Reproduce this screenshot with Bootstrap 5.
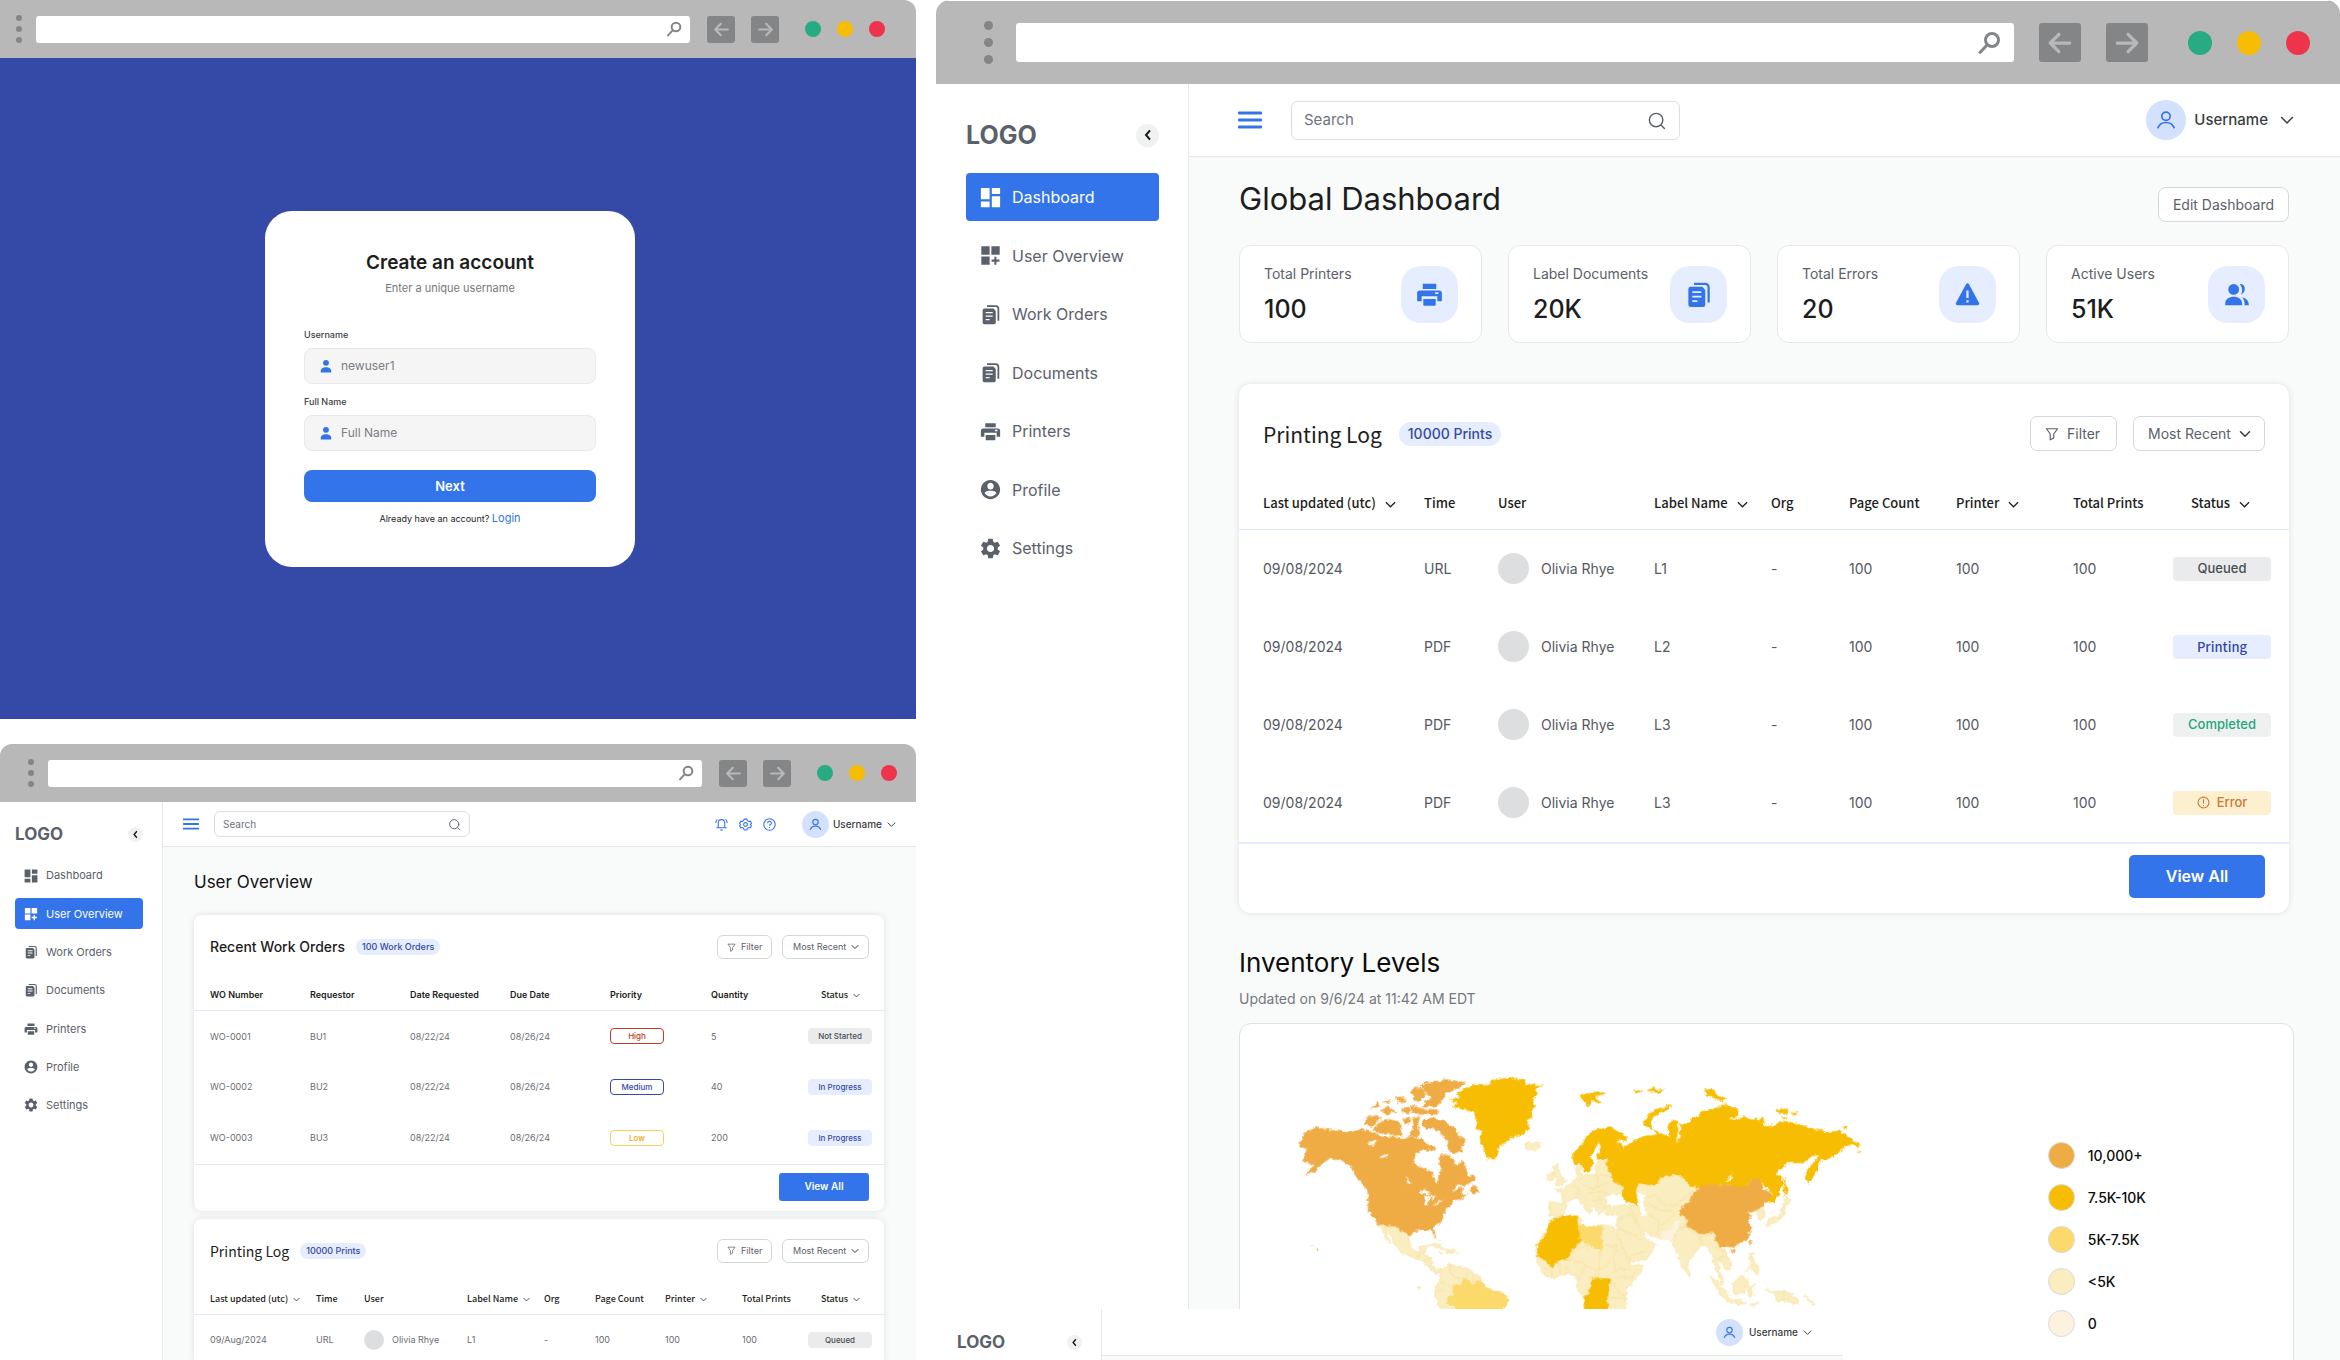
<!DOCTYPE html>
<html lang="en">
<head>
<meta charset="utf-8">
<meta name="viewport" content="width=device-width, initial-scale=1">
<title>Print management dashboards</title>
<link href="https://cdn.jsdelivr.net/npm/bootstrap@5.3.0/dist/css/bootstrap.min.css" rel="stylesheet">
<style>
:root{--blue:#3374ea;--navy:#3549a6;--ink:#1c1d20;--slate:#5b616b;--line:#e6e8e8;--canvas:#f9fbfa;--tint:#e5edfe}
body{font-family:Inter,"Open Sans",sans-serif;background:#fff;color:var(--ink);height:100vh;overflow:hidden}
svg{display:block;flex:none}
button,input,select{font-family:inherit}
.stage{display:grid;grid-template-columns:916fr 1404fr;column-gap:20px;height:100vh}
.stage-left{display:grid;grid-template-rows:719fr 616fr;row-gap:25px;min-width:0;min-height:0}
.stage-right{position:relative;display:flex;flex-direction:column;min-width:0;min-height:0}
.stage-right>.win-lg{flex:1}
.win{display:flex;flex-direction:column;min-width:0;min-height:0;overflow:hidden;position:relative;background:#fff}
.src{font-family:"Noto Sans CJK SC","Noto Sans",sans-serif}

/* browser chrome */
.chrome{background:#b8b8b8;flex:none;display:flex;align-items:center}
.chrome .kebab{display:flex;flex-direction:column;justify-content:space-between}
.chrome .kebab i{border-radius:50%;background:#838587;display:block}
.chrome .addr{flex:1;min-width:0;background:#fff;border-radius:3px;display:flex;align-items:center;justify-content:flex-end}
.chrome .addr input{flex:1;min-width:0;border:0;background:none;outline:0;height:100%}
.chrome .step{background:#838587;border:0;padding:0;border-radius:3px;display:flex;align-items:center;justify-content:center;color:#b8b8b8}
.chrome .lamps{display:flex}
.lamps i{border-radius:50%;display:block}
.lamps i:nth-child(1){background:#28ab82}.lamps i:nth-child(2){background:#f6bd02}.lamps i:nth-child(3){background:#ed344b}
.win-sm .chrome{height:58px;padding:0 19px 0 28px}
.win-sm .kebab{height:28px;width:6px;margin-right:14px}
.win-sm .kebab i{width:6px;height:6px}
.win-sm .addr{height:27px;padding-right:8px;margin-right:17px}
.win-sm .addr svg{width:16px;height:16px}
.win-sm .step{width:28px;height:27px;margin-right:16px}
.win-sm .step svg{width:17px;height:17px}
.win-sm .lamps{gap:16px;margin-left:10px}
.win-sm .lamps i{width:16px;height:16px}
.win-sm.win-cut .chrome{padding:0 31px 0 16px}
.win-lg .chrome{height:84px;padding:0 30px 0 48px;border-top:1px solid #fff}
.win-lg .kebab{height:43px;width:9px;margin-right:23px}
.win-lg .kebab i{width:9px;height:9px}
.win-lg .addr{height:39px;padding-right:13px;margin-right:25px}
.win-lg .addr svg{width:24px;height:24px}
.win-lg .step{width:42px;height:39px;margin-right:25px}
.win-lg .step svg{width:26px;height:26px}
.win-lg .lamps{gap:25px;margin-left:15px}
.win-lg .lamps i{width:24px;height:24px}
.win-cut{border-radius:0 12px 0 0}
.win-full{border-radius:12px 12px 0 0}
.win-lg{border-radius:14px 14px 0 0}

/* sign-up */
.signup-bg{background:var(--navy);padding-right:16px}
.signup{width:370px;background:#fff;border-radius:27px;padding:38px 39px 40px}
.signup h1{font-size:19px;line-height:28px;font-weight:600;margin:0 0 3px;text-align:center}
.signup .hint{font-size:11px;line-height:16px;color:#75777b;text-align:center;margin:0 0 33px}
.signup label{font-size:9px;line-height:12px;font-weight:500;color:#3c3e44;display:block;margin-bottom:7px}
.signup .field{height:36px;background:#f5f5f6;border:1px solid #e8e9ea;border-radius:8px;display:flex;align-items:center;padding-left:14px;gap:8px;margin-bottom:12px}
.signup .field svg{width:14px;height:14px;color:var(--blue)}
.signup .field input{border:0;background:none;outline:0;flex:1;min-width:0;font-size:12px;padding:0;color:#7b7e84}
.signup .field input::placeholder{color:#7b7e84;opacity:1}
.signup .btn{width:100%;height:32px;background:var(--blue);color:#fff;border-radius:8px;font-size:13px;line-height:16px;font-weight:600;margin-top:7px;padding:0}
.signup .foot{font-size:9px;line-height:16px;text-align:center;margin:8px 0 0}
.signup .foot a{font-size:11px;color:var(--blue);text-decoration:none}

/* application shell */
.shell{flex:1;min-height:0;display:flex}
.side{flex:none;background:#fff;border-right:1px solid var(--line)}
.side .top{display:flex;align-items:center;justify-content:space-between}
.brand{font-weight:700;color:var(--slate);line-height:1}
.fold{border:0;border-radius:50%;background:#f0f1f1;padding:0;display:flex;align-items:center;justify-content:center;color:#16171a}
.menu{display:flex;flex-direction:column;justify-content:space-between;flex-wrap:nowrap}
.menu .nav-link{display:flex;align-items:center;color:var(--slate);padding-top:0;padding-bottom:0;border-radius:4px}
.menu .nav-link.active{background:var(--blue);color:#fff}
.pane{flex:1;min-width:0;background:var(--canvas)}
.bar{background:#fff;border-bottom:1px solid var(--line);display:flex;align-items:center}
.burger{border:0;background:none;padding:0;color:var(--blue)}
.find{border:1px solid #dcdee0;border-radius:6px;display:flex;align-items:center;background:#fff;color:var(--slate)}
.find input{border:0;outline:0;background:none;flex:1;min-width:0;padding:0}
.find input::placeholder{color:#6f737a;opacity:1}
.tool{border:0;background:none;padding:0;color:var(--blue)}
.who{border:0;background:none;padding:0;display:flex;align-items:center;font-weight:500;color:#3a3d44}
.who .face{border-radius:50%;background:#d4e1fd;color:var(--blue);display:flex;align-items:center;justify-content:center}
.panel{background:#fff;box-shadow:0 0 6px rgba(40,50,60,.13)}
.panel-top{display:flex;align-items:center}
.panel h2,.panel-top .pill{margin:0}
.pill{background:var(--tint);color:var(--navy);font-weight:500;border-radius:20px}
.ctl{background-color:#fff;border:1px solid #d5d8db;color:var(--slate);display:flex;align-items:center;font-weight:400}
.go{background:var(--blue);color:#fff;font-weight:600;border:0}
.go:hover{background:#2563d8;color:#fff}
.grid-t{width:100%;table-layout:fixed;border-collapse:collapse}
.grid-t th,.grid-t td{padding:0;white-space:nowrap;text-align:left;vertical-align:middle}
.grid-t th svg{display:inline-block;vertical-align:middle}
.grid-t thead{border-bottom:1px solid #dfe8fb}
.user{display:flex;align-items:center}
.user i{background:#dddee0;border-radius:50%;flex:none}
.tag{display:flex;align-items:center;justify-content:center;border-radius:4px;font-weight:500}
.t-grey{background:#e9ebec;color:#4a4d54}.t-blue{background:var(--tint);color:var(--navy)}
.t-green{background:#eff1f1;color:#1fa67c}.t-amber{background:#fdf0d0;color:#d0782e}
.ring{background:#fff;border:1px solid}
.r-high{color:#c23b22}.r-mid{color:var(--navy)}.r-low{color:#f2a414;border-color:#f9d058}

.win-sm .side{width:163px;padding:22px 19px 0 15px}
.win-sm .side .top{height:20px;margin-bottom:16px}
.win-sm .brand{font-size:17px}
.win-sm .fold{width:15px;height:15px}.win-sm .fold svg{width:11px;height:11px}
.win-sm .menu{height:261px}
.win-sm .menu .nav-link{height:31px;padding-left:9px;padding-right:0;gap:8px;font-size:11px}
.win-sm .menu svg{width:14px;height:14px}
.win-sm .bar{height:45px;padding:0 20px 0 20px}
.win-sm .burger svg{width:16px;height:12px}
.win-sm .find{width:256px;height:26px;margin-left:15px;padding:0 8px;font-size:10px}
.win-sm .find svg{width:13px;height:13px}
.win-sm .tools{display:flex;gap:11px;margin-right:26px}
.win-sm .tool svg{width:13px;height:13px}
.win-sm .who{font-size:10px}
.win-sm .face{width:27px;height:27px;margin-right:4px}.win-sm .face svg{width:13px;height:13px}
.win-sm .who>svg{width:9px;height:9px;margin-left:5px}
.win-sm .body{padding:23px 32px 0 31px}
.win-sm h1.ttl{font-size:17px;line-height:24px;font-weight:400;margin:0 0 21px;color:#111}
.win-sm .panel{border-radius:8px;margin-bottom:8px}
.win-sm .panel-top{padding:20px 15px 0 16px}
.win-sm .panel h2{font-size:14px;line-height:24px;font-weight:500}
.win-sm .panel h2.src{font-weight:400}
.win-sm .panel-top .pill{font-size:9px;line-height:16px;padding:0 6px;margin-left:11px}
.win-sm .ctl{height:24px;font-size:9px;border-radius:6px}
.win-sm .ctl.filter{width:55px;gap:5px;padding:0 9px;margin:0 10px 0 auto}
.win-sm .ctl.filter svg{width:9px;height:9px}
.win-sm .ctl.form-select{width:87px;padding:0 18px 0 10px;background-position:right 9px center;background-size:8px 8px}
.win-sm .grid-t th{font-size:9px;line-height:14px;padding:29px 0 8px;font-weight:600}
.win-sm .grid-t .src th,.win-sm .grid-t th.src{font-size:9px;font-weight:500}
.win-sm .grid-t th svg{width:7px;height:7px;margin-left:5px}
.win-sm .grid-t td{font-size:9px;height:51px;color:#6a6e75}
.win-sm .grid-t tr>*:first-child{padding-left:16px}
.win-sm .grid-t th:last-child{padding-left:13px}
.win-sm .tag{width:64px;height:16px;font-size:8px}
.win-sm .ring{width:54px}
.win-sm .user{gap:8px}.win-sm .user i{width:20px;height:20px}
.win-sm .panel-end{border-top:1px solid var(--line);padding:8px 15px 10px;display:flex;justify-content:flex-end}
.win-sm .go{width:90px;height:28px;font-size:10px;padding:0;border-radius:3px}

.win-lg .side{width:253px;padding:39px 29px 0 30px}
.win-lg .side .top{height:24px;margin-bottom:26px}
.win-lg .brand{font-size:25px}
.win-lg .fold{width:23px;height:23px}.win-lg .fold svg{width:16px;height:16px}
.win-lg .menu{height:399px}
.win-lg .menu .nav-link{height:48px;padding-left:14px;gap:11px;font-size:16px}
.win-lg .menu svg{width:21px;height:21px}
.win-lg .bar{height:73px;padding:0 46px 0 49px}
.win-lg .burger svg{width:24px;height:18px}
.win-lg .find{width:389px;height:39px;margin-left:29px;padding:0 13px 0 12px;font-size:15px}
.win-lg .find svg{width:19px;height:19px}
.win-lg .who{font-size:15px}
.win-lg .face{width:40px;height:40px;margin-right:8px}.win-lg .face svg{width:20px;height:20px}
.win-lg .who>svg{width:14px;height:14px;margin-left:12px}
.win-lg .body{padding:30px 51px 0 50px}
.win-lg .ttl{font-size:31px;line-height:24px;font-weight:400;margin:0}
.edit{width:131px;height:35px;font-size:14px;border-radius:8px;padding:0;justify-content:center}
.stats{display:grid;grid-template-columns:repeat(4,1fr);gap:26px;margin:23px 0 41px}
.stat{background:#fff;border:1px solid var(--line);border-radius:12px;height:98px;display:flex;align-items:center;justify-content:space-between;padding:0 23px 0 24px}
.stat small{display:block;font-size:14px;line-height:18px;color:var(--slate);margin-bottom:12px}
.stat strong{display:block;font-size:25px;line-height:28px;font-weight:500}
.stat .chip{width:57px;height:57px;border-radius:20px;background:var(--tint);color:var(--blue);display:flex;align-items:center;justify-content:center}
.stat .chip svg{width:27px;height:27px}
.win-lg .panel{border-radius:12px}
.win-lg .panel-top{padding:32px 24px 0}
.win-lg .panel h2{font-size:21px;line-height:32px;font-weight:400}
.win-lg .panel-top .pill{font-size:14px;line-height:24px;padding:0 9px;margin-left:17px}
.win-lg .ctl.filter{width:87px;height:35px;font-size:14px;gap:8px;padding:0 14px;border-radius:7px;margin:0 16px 0 auto}
.win-lg .ctl.filter svg{width:14px;height:14px}
.win-lg .ctl.form-select{width:132px;height:35px;font-size:14px;border-radius:7px;padding:0 28px 0 14px;background-position:right 13px center;background-size:12px 12px}
.win-lg .grid-t th{font-size:13px;line-height:20px;padding:42px 0 16px;font-weight:500}
.win-lg .grid-t th svg{width:11px;height:11px;margin-left:9px}
.win-lg .grid-t td{font-size:14px;height:78px;color:#54585f}
.win-lg .grid-t tr>*:first-child{padding-left:24px}
.win-lg .grid-t th:last-child{padding-left:18px}
.win-lg .tag{width:98px;height:24px;font-size:13px;gap:7px}
.win-lg .tag svg{width:13px;height:13px}
.win-lg .user{gap:12px}.win-lg .user i{width:31px;height:31px}
.win-lg .panel-end{border-top:2px solid #e4ecfd;padding:11px 24px 15px;display:flex;justify-content:flex-end}
.win-lg .go{width:136px;height:43px;font-size:16px;padding:0;border-radius:5px}
.inv{font-size:26px;line-height:36px;font-weight:400;margin:32px 0 8px;color:#0c0c0d}
.inv-sub{font-size:14px;line-height:20px;color:#75787d;margin:0 0 14px}
.atlas{background:#fff;border:1px solid #dfe2e2;border-radius:12px;height:420px;display:flex;padding:45px 0 0 50px;margin-right:-5px}
.atlas svg{width:60%;height:251px}
.legend{list-style:none;margin:0;padding:73px 0 0 156px;font-size:14px;font-weight:500;color:#0c0c0d;display:flex;flex-direction:column;gap:14px}
.legend li{display:flex;align-items:center;gap:13px;height:28px}
.legend i{width:27px;height:27px;border-radius:50%;border:1px solid #d9dadd}
.q4 i{background:#efab44}.q3 i{background:#f6bd02}.q2 i{background:#fbd96a}.q1 i{background:#faedc0}.q0 i{background:#fdf2de}

/* window that overlaps the large one at the bottom */
.peek{position:absolute;left:0;bottom:0;width:907px;height:51px;background:#fff;display:flex;overflow:hidden}
.peek .side{width:166px;padding:23px 19px 0 21px}
.peek .bar{height:47px;padding:0 31px 0 0;justify-content:flex-end}
.peek .face{margin-right:6px}
</style>
<script src="https://cdn.jsdelivr.net/npm/bootstrap@5.3.0/dist/js/bootstrap.bundle.min.js"></script>
</head>
<body>
<svg width="0" height="0" class="position-absolute" aria-hidden="true">
  <symbol id="loupe" viewBox="0 0 24 24"><g fill="none" stroke="#838587" stroke-width="3" stroke-linecap="round"><circle cx="15" cy="9" r="6.5"/><path d="M10 14l-7 7.500"/></g></symbol>
  <symbol id="left" viewBox="0 0 24 24"><path d="M21 12H4M11 4l-8 8 8 8" fill="none" stroke="currentColor" stroke-width="3" stroke-linecap="round" stroke-linejoin="round"/></symbol>
  <symbol id="right" viewBox="0 0 24 24"><path d="M3 12h17M13 4l8 8-8 8" fill="none" stroke="currentColor" stroke-width="3" stroke-linecap="round" stroke-linejoin="round"/></symbol>
  <symbol id="person" viewBox="0 0 24 24"><circle cx="12" cy="6.500" r="5" fill="currentColor"/><path d="M3 23v-2c0-5 4-7 9-7s9 2 9 7v2z" fill="currentColor"/></symbol>
  <symbol id="back" viewBox="0 0 12 12"><path d="M7.500 2.500L4.500 6l3 3.500" fill="none" stroke="currentColor" stroke-width="1.500"/></symbol>
  <symbol id="down" viewBox="0 0 12 12"><path d="M1 3.500l5 5 5-5" fill="none" stroke="currentColor" stroke-width="1.300"/></symbol>
  <symbol id="bars" viewBox="0 0 24 18"><path d="M1 2h22M1 9h22M1 16h22" stroke="currentColor" stroke-width="2.800" stroke-linecap="round"/></symbol>
  <symbol id="search" viewBox="0 0 24 24"><g fill="none" stroke="currentColor" stroke-width="1.800" stroke-linecap="round"><circle cx="11.500" cy="11.500" r="8.500"/><path d="M18 18l4 4"/></g></symbol>
  <symbol id="dash" viewBox="0 0 24 24"><path fill="currentColor" d="M1 1h10v13H1zM1 16.500h10V23H1zM13.500 10.500h9.500V23h-9.500zM13.500 1h9.500v7h-9.500z"/></symbol>
  <symbol id="over" viewBox="0 0 24 24"><path fill="currentColor" d="M1.500 1.500h9.500v9.500H1.500zM13 1.500h9.500v9.500H13zM1.500 13h9.500v9.500H1.500zM18.800 13.500h-2.400v3.200h-3.200v2.400h3.200v3.400h2.400v-3.400h3.400v-2.400h-3.400z"/></symbol>
  <symbol id="docs" viewBox="0 0 24 24"><path d="M8 2.500h10a3 3 0 0 1 3 3V19" fill="none" stroke="currentColor" stroke-width="2"/><path fill="currentColor" fill-rule="evenodd" d="M5 5h10.500l2.500 3v13a2 2 0 0 1-2 2H5a2 2 0 0 1-2-2V7a2 2 0 0 1 2-2zm1.500 4v1.600h8V9zm0 4v1.600h8V13zm0 4v1.600h4.500V17z"/></symbol>
  <symbol id="print" viewBox="0 0 24 24"><path fill="currentColor" d="M6 2.500h12v4.500H6zM6.500 16h11v5a1 1 0 0 1-1 1h-9a1 1 0 0 1-1-1z"/><path fill="currentColor" fill-rule="evenodd" d="M3.500 8.500h17A2.500 2.500 0 0 1 23 11v7h-4v-4.500H5V18H1v-7a2.500 2.500 0 0 1 2.500-2.500zM17 10v1.600h3V10z"/></symbol>
  <symbol id="acct" viewBox="0 0 24 24"><path fill="currentColor" transform="translate(-1.200 -1.200) scale(1.100)" d="M12 2C6.480 2 2 6.480 2 12s4.480 10 10 10 10-4.480 10-10S17.520 2 12 2zm0 3c1.800 0 3.300 1.500 3.300 3.500S13.800 12 12 12s-3.300-1.500-3.300-3.500S10.200 5 12 5zm0 14.200c-2.500 0-4.710-1.280-6-3.220.03-1.990 4-2.580 6-2.580s5.970.59 6 2.580c-1.290 1.940-3.500 3.220-6 3.220z"/></symbol>
  <symbol id="gear" viewBox="0 0 24 24"><path fill="currentColor" transform="translate(-1.800 -1.800) scale(1.150)" d="M19.140 12.940c.04-.3.06-.61.06-.94 0-.32-.02-.64-.07-.94l2.030-1.580c.18-.14.23-.41.12-.61l-1.920-3.320c-.12-.22-.37-.29-.59-.22l-2.390.96c-.5-.38-1.030-.7-1.620-.94l-.36-2.540c-.04-.24-.24-.41-.48-.41h-3.840c-.24 0-.43.17-.47.41l-.36 2.540c-.59.24-1.130.57-1.620.94l-2.390-.96c-.22-.08-.47 0-.59.22L2.740 8.870c-.12.21-.08.47.12.61l2.030 1.580c-.05.3-.09.63-.09.94s.02.64.07.94l-2.030 1.580c-.18.14-.23.41-.12.61l1.920 3.320c.12.22.37.29.59.22l2.390-.96c.5.38 1.030.7 1.620.94l.36 2.540c.05.24.24.41.48.41h3.840c.24 0 .44-.17.47-.41l.36-2.540c.59-.24 1.130-.56 1.620-.94l2.390.96c.22.08.47 0 .59-.22l1.920-3.320c.12-.22.07-.47-.12-.61l-2.010-1.580zM12 15.600c-1.980 0-3.600-1.620-3.600-3.600s1.620-3.600 3.600-3.600 3.600 1.620 3.600 3.600-1.620 3.600-3.600 3.600z"/></symbol>
  <symbol id="face" viewBox="0 0 24 24"><g fill="none" stroke="currentColor" stroke-width="2"><circle cx="12" cy="7.500" r="5"/><path d="M2 22c2-5 5-7 10-7s8 2 10 7"/></g></symbol>
  <symbol id="bell" viewBox="0 0 24 24"><g fill="none" stroke="currentColor" stroke-width="2"><path d="M6 18V9a6 6 0 0 1 12 0v9M2.500 18h19M9.500 22h5M1.500 9c0-3 1-5 3-6.500M22.500 9c0-3-1-5-3-6.500"/></g></symbol>
  <symbol id="cog" viewBox="0 0 24 24"><g fill="none" stroke="currentColor" stroke-width="2"><path d="M9.500 2h5l1 3 2.500 1.500 3-.7 2 4-2 2.200 2 2.200-2 4-3-.7-2.500 1.500-1 3h-5l-1-3L6 17.500l-3 .7-2-4L3 12 1 9.800l2-4 3 .7L8.500 5z"/><circle cx="12" cy="12" r="3.500"/></g></symbol>
  <symbol id="help" viewBox="0 0 24 24"><g fill="none" stroke="currentColor" stroke-width="2"><circle cx="12" cy="12" r="10.500"/><path d="M8.500 9.500c0-4.500 7-4.500 7 0 0 2.500-3.500 2.500-3.500 5M12 16.500v2"/></g></symbol>
  <symbol id="funnel" viewBox="0 0 24 24"><path d="M2.500 3h19l-6.500 9v7l-6 3v-10z" fill="none" stroke="currentColor" stroke-width="2" stroke-linejoin="round"/></symbol>
  <symbol id="warn" viewBox="0 0 24 24"><path fill="currentColor" fill-rule="evenodd" d="M10.800 2.600a1.400 1.400 0 0 1 2.400 0l9 16.800a1.400 1.400 0 0 1-1.200 2.100H3a1.400 1.400 0 0 1-1.200-2.100zM11 8.500v6.500h2V8.500zm0 8.500v2.200h2V17z"/></symbol>
  <symbol id="users" viewBox="0 0 24 24"><g fill="currentColor"><circle cx="9.500" cy="7.500" r="4.800"/><path d="M2 21.500v-1.500c0-4 3.500-6 7.500-6s7.500 2 7.500 6v1.500zM15 2.800c4.800-.6 6.500 6.500 1 9.400 1.600-3.500 1.400-6.500-1-9.400zM17 14.500c3.500.8 6 3 6 7h-3.800c0-3-.6-5-2.200-7z"/></g></symbol>
  <symbol id="alert" viewBox="0 0 24 24"><g fill="none" stroke="currentColor" stroke-width="2"><circle cx="12" cy="12" r="10"/><path d="M12 6v8M12 16.500v2"/></g></symbol>
</svg>

<main class="stage">
  <div class="stage-left">
    <section class="win win-sm win-cut">
      <div class="chrome">
        <span class="kebab"><i></i><i></i><i></i></span>
        <label class="addr"><input type="text" aria-label="Address"><svg><use href="#loupe"/></svg></label>
        <button class="step" aria-label="Back"><svg><use href="#left"/></svg></button>
        <button class="step" aria-label="Forward"><svg><use href="#right"/></svg></button>
        <span class="lamps"><i></i><i></i><i></i></span>
      </div>
      <div class="signup-bg flex-fill d-flex align-items-center justify-content-center">
        <form class="signup">
          <h1>Create an account</h1>
          <p class="hint">Enter a unique username</p>
          <label for="su-user">Username</label>
          <div class="field"><svg><use href="#person"/></svg><input id="su-user" type="text" value="newuser1"></div>
          <label for="su-name">Full Name</label>
          <div class="field"><svg><use href="#person"/></svg><input id="su-name" type="text" placeholder="Full Name"></div>
          <button type="button" class="btn">Next</button>
          <p class="foot">Already have an account? <a href="#">Login</a></p>
        </form>
      </div>
    </section>

    <section class="win win-sm win-full">
      <div class="chrome">
        <span class="kebab"><i></i><i></i><i></i></span>
        <label class="addr"><input type="text" aria-label="Address"><svg><use href="#loupe"/></svg></label>
        <button class="step" aria-label="Back"><svg><use href="#left"/></svg></button>
        <button class="step" aria-label="Forward"><svg><use href="#right"/></svg></button>
        <span class="lamps"><i></i><i></i><i></i></span>
      </div>
      <div class="shell">
        <aside class="side">
          <div class="top"><span class="brand">LOGO</span><button class="fold" aria-label="Collapse"><svg><use href="#back"/></svg></button></div>
          <nav class="nav menu">
            <a class="nav-link" href="#"><svg><use href="#dash"/></svg>Dashboard</a>
            <a class="nav-link active" href="#"><svg><use href="#over"/></svg>User Overview</a>
            <a class="nav-link" href="#"><svg><use href="#docs"/></svg>Work Orders</a>
            <a class="nav-link" href="#"><svg><use href="#docs"/></svg>Documents</a>
            <a class="nav-link" href="#"><svg><use href="#print"/></svg>Printers</a>
            <a class="nav-link" href="#"><svg><use href="#acct"/></svg>Profile</a>
            <a class="nav-link" href="#"><svg><use href="#gear"/></svg>Settings</a>
          </nav>
        </aside>
        <div class="pane">
          <header class="bar">
            <button class="burger" aria-label="Menu"><svg><use href="#bars"/></svg></button>
            <label class="find"><input type="search" placeholder="Search" aria-label="Search"><svg><use href="#search"/></svg></label>
            <div class="tools ms-auto">
              <button class="tool" aria-label="Alerts"><svg><use href="#bell"/></svg></button>
              <button class="tool" aria-label="Settings"><svg><use href="#cog"/></svg></button>
              <button class="tool" aria-label="Help"><svg><use href="#help"/></svg></button>
            </div>
            <button class="who"><span class="face"><svg><use href="#face"/></svg></span>Username<svg><use href="#down"/></svg></button>
          </header>
          <div class="body">
            <h1 class="ttl">User Overview</h1>
            <section class="panel">
              <div class="panel-top">
                <h2>Recent Work Orders</h2><span class="pill">100 Work Orders</span>
                <button class="btn ctl filter"><svg><use href="#funnel"/></svg>Filter</button>
                <select class="form-select ctl" aria-label="Sort work orders"><option>Most Recent</option></select>
              </div>
              <table class="grid-t">
                <colgroup><col width="116"><col width="100"><col width="100"><col width="100"><col width="101"><col width="97"><col width="76"></colgroup>
                <thead><tr><th>WO Number</th><th>Requestor</th><th>Date Requested</th><th>Due Date</th><th>Priority</th><th>Quantity</th><th class="src">Status<svg><use href="#down"/></svg></th></tr></thead>
                <tbody>
                  <tr><td>WO-0001</td><td>BU1</td><td>08/22/24</td><td>08/26/24</td><td><span class="tag ring r-high">High</span></td><td>5</td><td><span class="tag t-grey">Not Started</span></td></tr>
                  <tr><td>WO-0002</td><td>BU2</td><td>08/22/24</td><td>08/26/24</td><td><span class="tag ring r-mid">Medium</span></td><td>40</td><td><span class="tag t-blue">In Progress</span></td></tr>
                  <tr><td>WO-0003</td><td>BU3</td><td>08/22/24</td><td>08/26/24</td><td><span class="tag ring r-low">Low</span></td><td>200</td><td><span class="tag t-blue">In Progress</span></td></tr>
                </tbody>
              </table>
              <div class="panel-end"><button class="btn go">View All</button></div>
            </section>
            <section class="panel">
              <div class="panel-top">
                <h2 class="src">Printing Log</h2><span class="pill">10000 Prints</span>
                <button class="btn ctl filter"><svg><use href="#funnel"/></svg>Filter</button>
                <select class="form-select ctl" aria-label="Sort printing log"><option>Most Recent</option></select>
              </div>
              <table class="grid-t">
                <colgroup><col width="122"><col width="48"><col width="103"><col width="77"><col width="51"><col width="70"><col width="77"><col width="66"><col width="76"></colgroup>
                <thead class="src"><tr><th>Last updated (utc)<svg><use href="#down"/></svg></th><th>Time</th><th>User</th><th>Label Name<svg><use href="#down"/></svg></th><th>Org</th><th>Page Count</th><th>Printer<svg><use href="#down"/></svg></th><th>Total Prints</th><th>Status<svg><use href="#down"/></svg></th></tr></thead>
                <tbody><tr><td>09/Aug/2024</td><td>URL</td><td><span class="user"><i></i>Olivia Rhye</span></td><td>L1</td><td>-</td><td>100</td><td>100</td><td>100</td><td><span class="tag t-grey">Queued</span></td></tr></tbody>
              </table>
            </section>
          </div>
        </div>
      </div>
    </section>
  </div>

  <div class="stage-right">
  <section class="win win-lg">
    <div class="chrome">
      <span class="kebab"><i></i><i></i><i></i></span>
      <label class="addr"><input type="text" aria-label="Address"><svg><use href="#loupe"/></svg></label>
      <button class="step" aria-label="Back"><svg><use href="#left"/></svg></button>
      <button class="step" aria-label="Forward"><svg><use href="#right"/></svg></button>
      <span class="lamps"><i></i><i></i><i></i></span>
    </div>
    <div class="shell">
      <aside class="side">
        <div class="top"><span class="brand">LOGO</span><button class="fold" aria-label="Collapse"><svg><use href="#back"/></svg></button></div>
        <nav class="nav menu">
          <a class="nav-link active" href="#"><svg><use href="#dash"/></svg>Dashboard</a>
          <a class="nav-link" href="#"><svg><use href="#over"/></svg>User Overview</a>
          <a class="nav-link" href="#"><svg><use href="#docs"/></svg>Work Orders</a>
          <a class="nav-link" href="#"><svg><use href="#docs"/></svg>Documents</a>
          <a class="nav-link" href="#"><svg><use href="#print"/></svg>Printers</a>
          <a class="nav-link" href="#"><svg><use href="#acct"/></svg>Profile</a>
          <a class="nav-link" href="#"><svg><use href="#gear"/></svg>Settings</a>
        </nav>
      </aside>
      <div class="pane">
        <header class="bar">
          <button class="burger" aria-label="Menu"><svg><use href="#bars"/></svg></button>
          <label class="find"><input type="search" placeholder="Search" aria-label="Search"><svg><use href="#search"/></svg></label>
          <button class="who ms-auto"><span class="face"><svg><use href="#face"/></svg></span>Username<svg><use href="#down"/></svg></button>
        </header>
        <div class="body">
          <div class="d-flex justify-content-between align-items-start">
            <h1 class="ttl">Global Dashboard</h1>
            <button class="btn ctl edit">Edit Dashboard</button>
          </div>
          <div class="stats">
            <div class="stat"><div><small>Total Printers</small><strong>100</strong></div><span class="chip"><svg><use href="#print"/></svg></span></div>
            <div class="stat"><div><small>Label Documents</small><strong>20K</strong></div><span class="chip"><svg><use href="#docs"/></svg></span></div>
            <div class="stat"><div><small>Total Errors</small><strong>20</strong></div><span class="chip"><svg><use href="#warn"/></svg></span></div>
            <div class="stat"><div><small>Active Users</small><strong>51K</strong></div><span class="chip"><svg><use href="#users"/></svg></span></div>
          </div>
          <section class="panel">
            <div class="panel-top">
              <h2 class="src">Printing Log</h2><span class="pill">10000 Prints</span>
              <button class="btn ctl filter"><svg><use href="#funnel"/></svg>Filter</button>
              <select class="form-select ctl" aria-label="Sort printing log"><option>Most Recent</option></select>
            </div>
            <table class="grid-t">
              <colgroup><col width="185"><col width="74"><col width="156"><col width="117"><col width="78"><col width="107"><col width="117"><col width="100"><col width="116"></colgroup>
              <thead class="src"><tr><th>Last updated (utc)<svg><use href="#down"/></svg></th><th>Time</th><th>User</th><th>Label Name<svg><use href="#down"/></svg></th><th>Org</th><th>Page Count</th><th>Printer<svg><use href="#down"/></svg></th><th>Total Prints</th><th>Status<svg><use href="#down"/></svg></th></tr></thead>
              <tbody>
                <tr><td>09/08/2024</td><td>URL</td><td><span class="user"><i></i>Olivia Rhye</span></td><td>L1</td><td>-</td><td>100</td><td>100</td><td>100</td><td><span class="tag t-grey">Queued</span></td></tr>
                <tr><td>09/08/2024</td><td>PDF</td><td><span class="user"><i></i>Olivia Rhye</span></td><td>L2</td><td>-</td><td>100</td><td>100</td><td>100</td><td><span class="tag t-blue src">Printing</span></td></tr>
                <tr><td>09/08/2024</td><td>PDF</td><td><span class="user"><i></i>Olivia Rhye</span></td><td>L3</td><td>-</td><td>100</td><td>100</td><td>100</td><td><span class="tag t-green">Completed</span></td></tr>
                <tr><td>09/08/2024</td><td>PDF</td><td><span class="user"><i></i>Olivia Rhye</span></td><td>L3</td><td>-</td><td>100</td><td>100</td><td>100</td><td><span class="tag t-amber"><svg><use href="#alert"/></svg>Error</span></td></tr>
              </tbody>
            </table>
            <div class="panel-end"><button class="btn go">View All</button></div>
          </section>
          <h2 class="inv">Inventory Levels</h2>
          <p class="inv-sub">Updated on 9/6/24 at 11:42 AM EDT</p>
          <section class="atlas">
            <svg viewBox="0 0 1800 753" preserveAspectRatio="xMinYMin meet" role="img" aria-label="World map of inventory levels">
              <defs><filter id="coast" x="0" y="0" width="1800" height="753" filterUnits="userSpaceOnUse" color-interpolation-filters="sRGB"><feTurbulence type="fractalNoise" baseFrequency=".07" numOctaves="3" seed="4" result="n"/><feDisplacementMap in="SourceGraphic" in2="n" scale="16" xChannelSelector="R" yChannelSelector="G"/></filter></defs>
              <g filter="url(#coast)">
                <g fill="#efab44">
                  <path d="M30 225L40 195 60 180 80 173 95 178 130 183 175 190 215 180 235 186 262 192 270 203 310 203 345 207 375 203 400 212 408 222 412 235 420 238 400 242 382 252 370 278 385 290 400 297 430 312 432 330 442 342 446 318 455 300 447 285 452 255 475 258 490 268 495 285 505 290 515 270 527 295 535 315 552 325 556 335 530 345 500 352 485 370 510 358 520 352 515 372 530 378 510 390 490 395 482 410 470 418 462 435 460 448 440 468 432 480 438 505 434 510 426 485 400 483 370 487 358 505 345 490 330 488 318 474 265 466 245 440 234 420 232 365 218 345 195 320 180 290 150 275 120 268 95 285 75 305 40 320 75 290 60 285 35 275 45 255 50 240 28 232z"/>
                  <path d="M538 364L553 343 570 372 552 372zM400 150L425 145 455 150 475 165 495 180 510 200 527 215 515 235 515 250 490 252 470 238 475 220 455 195 435 180 410 178 392 170zM262 165L285 150 325 155 335 180 338 198 310 200 270 190 250 185zM228 145L262 138 275 148 245 174 225 165zM238 120L262 102 272 112zM268 125L295 113 318 130 290 137zM275 98L300 90 298 102zM318 82L345 86 342 102 322 98zM334 118L358 113 360 134 338 130zM336 148L360 143 358 168 345 165zM365 145L390 143 384 170 392 200 355 204 368 180zM360 108L400 122 445 125 440 137 385 137 365 130zM362 75L375 52 400 62 408 85 380 97zM385 48L425 38 470 31 528 40 505 58 470 68 462 90 440 112 395 115 405 98 425 88 405 72 402 60zM402 222L430 232 440 245 410 245zM76 538L86 542 84 548zM62 528l6 2v4z"/>
                </g>
                <path fill="#fff" d="M230 222L264 210 250 232zM268 266L300 250 285 266zM350 320L364 348 354 342zM386 374L402 358 420 374 405 376zM408 380L432 377 417 386 411 410 403 407zM426 382L439 380 431 400zM424 408L460 391 440 408z"/>
                <path fill="#f6bd02" d="M475 93L510 85 500 72 530 55 560 45 600 45 605 33 660 25 710 35 705 45 762 48 735 60 745 75 728 90 735 110 722 130 728 145 712 155 718 180 700 195 665 205 650 222 630 228 615 272 595 268 580 240 568 205 578 185 560 180 560 155 548 130 520 118 485 115 505 102z"/>
                <g fill="#faedc0" stroke="#f7dd92" stroke-width="2">
                  <path d="M706 225L715 218 725 224 745 218 756 230 735 244 710 240zM265 466L318 474 330 488 345 490 358 505 360 530 375 550 388 545 392 532 410 530 402 558 422 565 427 590 440 602 452 598 452 610 435 612 400 582 375 568 340 554 318 530 300 495 282 470 302 523 288 512 273 480zM412 532L428 522 455 532 470 542 445 538 425 528zM470 543L498 545 490 553 470 551zM448 550l12 3-10 1zM501 549l8 2-6 2zM448 512l5 6zM385 652l4 5-4 2z"/>
                  <path d="M455 600L480 585 500 590 535 598 560 620 575 625 580 645 600 665V753H470L450 717 435 680 440 650 452 630z"/>
                  <path fill="none" d="M378 566L402 545M400 578L418 568M480 587L482 615 510 628M452 640L486 655M440 668L462 660M535 600L530 628M550 618L548 645M565 624V640"/>
                </g>
                <path fill="#fbd96a" d="M490 650L515 645 515 630 530 628 545 645 575 635 590 655 630 668 655 685 652 705 640 725V753H510L490 712 470 700 475 680 488 675z"/>
                <g transform="translate(720 0)">
                  <g fill="#faedc0" stroke="#f7dd92" stroke-width="2">
                    <path d="M57 397L95 402 112 405 100 440 60 440zM75 362L100 360 130 335 140 325 138 295 150 290 155 320 200 315 195 300 205 278 228 275 240 310 250 338 283 352 275 370 265 378 240 385 228 400 225 415 210 435 200 425 185 400 165 385 188 412 178 432 150 400 140 385 120 395 100 402 95 375zM70 290L88 285 85 305 106 335 100 348 72 350 85 335 72 315zM52 315L70 310 70 335 52 338z"/>
                    <path d="M325 345L385 345 390 322 430 315 460 325 480 348 508 357 490 370 480 398 450 420 450 440 475 450 470 470 510 495 555 490 575 535 605 580 600 602 585 600 572 575 560 570 582 640 574 645 558 600 545 560 530 530 512 530 475 575 468 608 458 600 437 540 425 515 395 508 360 500 332 482 350 510 380 525 350 570 300 582 260 500 262 455 265 440 225 435 222 415 260 405 300 410 325 412 330 435 348 438 345 410 330 375 318 362z"/>
                    <path d="M70 445L140 437 152 450 150 465 185 475 205 465 250 472 262 500 298 575 305 590 340 588 325 620 290 660 287 753H165L158 680 143 665 142 630 115 615 60 628 35 610 20 575 20 530z"/>
                    <path d="M705 465L725 448 750 440 760 405 768 385 784 396 767 408 760 440 735 458 712 474zM680 415L695 408 706 440 690 457 682 435zM658 550L668 550 670 575 690 600 686 622 666 604 660 580zM605 645L640 616 656 640 640 674 615 672zM541 624L560 635 592 672 597 688 650 700 640 708 590 697 565 668zM652 652L676 648 662 660 670 682 655 677zM710 660L730 668 770 665 800 690 806 706 770 697 740 697 735 680zM822 682L845 695 858 713zM660 705l30-4-20 10zM472 600l10 10-4 12-6-8zM645 610l14-16z"/>
                    <path fill="none" d="M150 335L165 320M130 348L150 365 135 388M160 345L185 360 205 355 202 318M205 355L240 335M165 375L205 368 235 372M185 395L210 388 228 395M205 318L245 325M345 385L375 378 400 405 435 410 480 372 508 360M355 405L400 425 445 425M300 412L315 440 330 480M265 450L300 435 318 460M265 480L300 490 345 520M300 560L350 545M385 500V455L355 435M385 470L420 450 440 430M430 515L445 480 470 470M475 480L510 505 540 495M512 500L512 530M555 535L580 545 600 575M565 570L590 560M216 472V530H262M210 545L205 620 188 625M120 552L172 528 172 545M162 590L205 605 250 570 262 530M250 570L255 600 300 600M262 625H310L320 600M240 628L262 665 285 680M118 570L165 585 160 610 142 630M90 575V620M110 590V618M65 597V625M40 590L60 605M235 685L285 690M240 730H285M60 400V440M760 668V700"/>
                  </g>
                  <path fill="#fff" d="M323 376L346 374 338 396 352 436 336 442 328 410zM230 383L255 376 270 393 288 406 230 409z"/>
                  <g fill="#f6bd02">
                    <path d="M162 307L155 285 133 288 123 262 145 240 170 200 190 185 235 173 260 185 290 205 290 215 262 216 280 238 310 215 345 200 378 197 370 182 418 202 412 180 430 148 444 160 445 190 438 218 452 205 450 165 480 160 485 148 510 140 510 128 560 118 585 103 600 113 628 120 625 140 595 152 640 145 680 150 700 148 705 172 740 168 755 155 800 162 850 180 895 188 930 185 960 205 990 225 985 240 965 225 940 238 930 250 895 270 870 275 862 290 862 310 845 325 835 347 826 320 835 295 868 258 845 262 820 282 770 282 735 318 758 320 757 345 745 380 728 402 710 395 725 372 690 335 665 330 650 352 600 352 560 345 510 357 480 350 460 327 430 317 390 324 385 347 325 347 318 360 325 412 280 395 275 370 283 352 250 338 240 310 228 290 230 270 200 272 205 250 215 230 205 222 195 240 182 262 190 285 178 307z"/>
                    <path d="M148 78L170 75 200 67 228 72 215 80 195 85 214 100 200 105 190 92 178 113 160 98zM310 64l16-4 12 6-18 6zM348 68l26-13 9 9 25-6-20 14zM338 166L355 140 375 120 424 108 420 119 385 132 365 152 360 165 372 180 348 174zM523 58L548 58 567 82 590 85 575 99 560 92 533 78zM738 120L776 120 770 135 745 135zM781 128L807 131 790 138zM753 142l18 6-9 5zM935 175L957 170 950 179zM980 246l16 0-4 4zM762 318L768 345 777 360 768 384 761 355z"/>
                    <path d="M70 450L100 440 140 437 143 460 155 515 120 550 118 568 85 575 68 597 40 570 22 560 22 530 50 490 58 462zM188 628L240 628 238 660 232 690 235 753H165L160 680 175 678z"/>
                  </g>
                  <path fill="#fff" d="M583 341L603 322 606 310 609 328z"/>
                  <path fill="#fbd96a" d="M148 465L185 478 205 465 216 472 216 543 172 525 150 512z"/>
                  <path fill="#fdf2de" d="M395 508L395 490 425 480 435 455 452 450 445 480 425 515z"/>
                  <path fill="#efab44" d="M447 420L480 398 490 370 515 352 560 345 600 352 650 352 665 330 690 332 705 365 725 372 715 395 690 420 665 430 650 432 668 440 655 452 665 480 650 515 610 535 570 532 555 515 555 490 510 495 470 470 475 450 450 440zM603 542l12 0-4 10-8-3zM660 514l8 0-5 16-4-6z"/>
                </g>
              </g>
            </svg>
            <ul class="legend">
              <li class="q4"><i></i>10,000+</li>
              <li class="q3"><i></i>7.5K-10K</li>
              <li class="q2"><i></i>5K-7.5K</li>
              <li class="q1"><i></i>&lt;5K</li>
              <li class="q0"><i></i>0</li>
            </ul>
          </section>
        </div>
      </div>
    </div>
  </section>
  <section class="peek win-sm">
    <aside class="side"><div class="top"><span class="brand">LOGO</span><button class="fold" aria-label="Collapse"><svg><use href="#back"/></svg></button></div></aside>
    <div class="pane"><header class="bar"><button class="who"><span class="face"><svg><use href="#face"/></svg></span>Username<svg><use href="#down"/></svg></button></header></div>
  </section>
  </div>
</main>
</body>
</html>
